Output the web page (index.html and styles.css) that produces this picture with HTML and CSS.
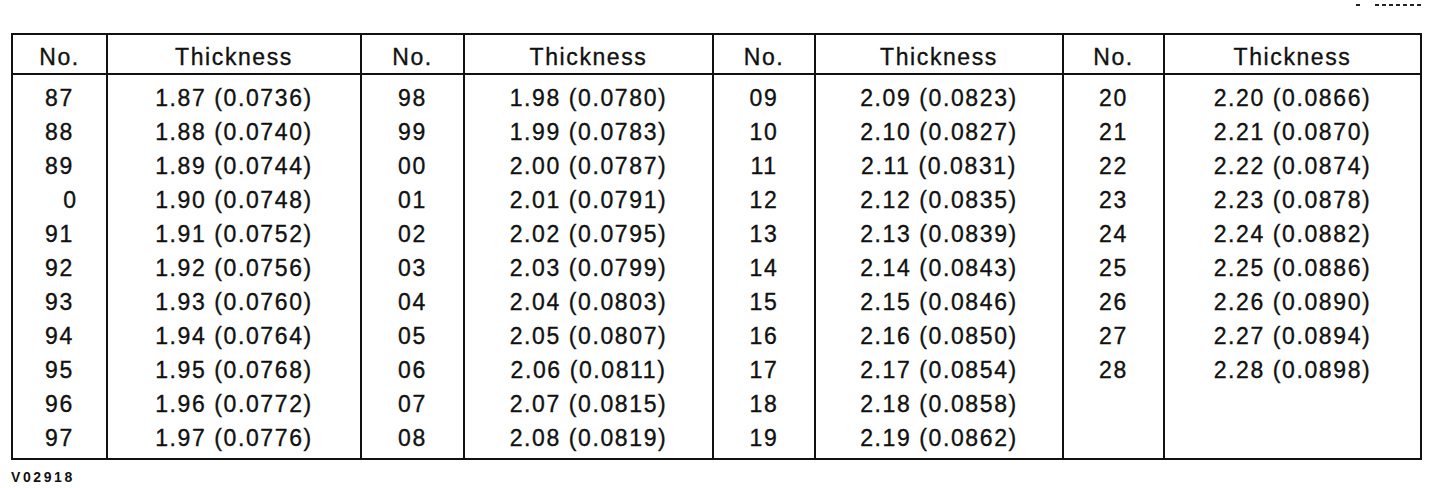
FILE: index.html
```html
<!DOCTYPE html>
<html>
<head>
<meta charset="utf-8">
<link rel="stylesheet" href="styles.css">
</head>
<body>
<div class="page">
  <div class="marks"><span class="dash dash-one"></span><span class="dash dash-row"></span></div>
  <table class="spec">
    <colgroup>
      <col class="c-no1"><col class="c-th1"><col class="c-no2"><col class="c-th2"><col class="c-no3"><col class="c-th3"><col class="c-no4"><col class="c-th4">
    </colgroup>
    <thead>
      <tr><th>No.</th><th>Thickness</th><th>No.</th><th>Thickness</th><th>No.</th><th>Thickness</th><th>No.</th><th>Thickness</th></tr>
    </thead>
    <tbody>
      <tr class="first"><td>87</td><td>1.87 (0.0736)</td><td>98</td><td>1.98 (0.0780)</td><td>09</td><td>2.09 (0.0823)</td><td>20</td><td>2.20 (0.0866)</td></tr>
      <tr><td>88</td><td>1.88 (0.0740)</td><td>99</td><td>1.99 (0.0783)</td><td>10</td><td>2.10 (0.0827)</td><td>21</td><td>2.21 (0.0870)</td></tr>
      <tr><td>89</td><td>1.89 (0.0744)</td><td>00</td><td>2.00 (0.0787)</td><td>11</td><td>2.11 (0.0831)</td><td>22</td><td>2.22 (0.0874)</td></tr>
      <tr><td class="shift">0</td><td>1.90 (0.0748)</td><td>01</td><td>2.01 (0.0791)</td><td>12</td><td>2.12 (0.0835)</td><td>23</td><td>2.23 (0.0878)</td></tr>
      <tr><td>91</td><td>1.91 (0.0752)</td><td>02</td><td>2.02 (0.0795)</td><td>13</td><td>2.13 (0.0839)</td><td>24</td><td>2.24 (0.0882)</td></tr>
      <tr><td>92</td><td>1.92 (0.0756)</td><td>03</td><td>2.03 (0.0799)</td><td>14</td><td>2.14 (0.0843)</td><td>25</td><td>2.25 (0.0886)</td></tr>
      <tr><td>93</td><td>1.93 (0.0760)</td><td>04</td><td>2.04 (0.0803)</td><td>15</td><td>2.15 (0.0846)</td><td>26</td><td>2.26 (0.0890)</td></tr>
      <tr><td>94</td><td>1.94 (0.0764)</td><td>05</td><td>2.05 (0.0807)</td><td>16</td><td>2.16 (0.0850)</td><td>27</td><td>2.27 (0.0894)</td></tr>
      <tr><td>95</td><td>1.95 (0.0768)</td><td>06</td><td>2.06 (0.0811)</td><td>17</td><td>2.17 (0.0854)</td><td>28</td><td>2.28 (0.0898)</td></tr>
      <tr><td>96</td><td>1.96 (0.0772)</td><td>07</td><td>2.07 (0.0815)</td><td>18</td><td>2.18 (0.0858)</td><td></td><td></td></tr>
      <tr class="last"><td>97</td><td>1.97 (0.0776)</td><td>08</td><td>2.08 (0.0819)</td><td>19</td><td>2.19 (0.0862)</td><td></td><td></td></tr>
    </tbody>
  </table>
  <div class="code">V02918</div>
</div>
</body>
</html>
```

FILE: styles.css
```css
html, body {
  margin: 0;
  padding: 0;
  background: #ffffff;
}

.page {
  position: relative;
  width: 1456px;
  height: 488px;
  padding: 33px 0 0 11px;
  box-sizing: border-box;
  font-family: "Liberation Sans", Arial, sans-serif;
  color: #111111;
}

.marks {
  position: absolute;
  top: 4px;
  left: 1356px;
  display: flex;
  gap: 15px;
}

.dash {
  display: block;
  height: 2px;
}

.dash-one {
  width: 4px;
  background: #222222;
}

.dash-row {
  width: 46px;
  background: repeating-linear-gradient(90deg, #222222 0 4px, transparent 4px 7px);
}

.spec {
  border-collapse: collapse;
  table-layout: fixed;
  width: 1411px;
  border: 2px solid #111111;
  font-size: 23px;
  letter-spacing: 1.6px;
  -webkit-text-stroke: 0.35px #111111;
}

.c-no1 { width: 95px; }
.c-th1 { width: 254px; }
.c-no2 { width: 103px; }
.c-th2 { width: 249px; }
.c-no3 { width: 102px; }
.c-th3 { width: 248px; }
.c-no4 { width: 101px; }
.c-th4 { width: 257px; }

.spec th,
.spec td {
  border-left: 2px solid #111111;
  border-right: 2px solid #111111;
  text-align: center;
  padding: 0;
  font-weight: normal;
  white-space: nowrap;
}

.spec th {
  height: 38px;
  padding-top: 6px;
  box-sizing: border-box;
  border-bottom: 2px solid #111111;
  line-height: 32px;
}

.spec td {
  height: 34px;
  line-height: 34px;
  vertical-align: middle;
}

.spec tr.first td {
  padding-top: 6px;
}

.spec tr.last td {
  padding-bottom: 3px;
}

.spec td.shift {
  padding-left: 22px;
}

.code {
  margin-top: 9px;
  font-size: 14px;
  font-weight: bold;
  line-height: 16px;
  letter-spacing: 2.6px;
}
```
